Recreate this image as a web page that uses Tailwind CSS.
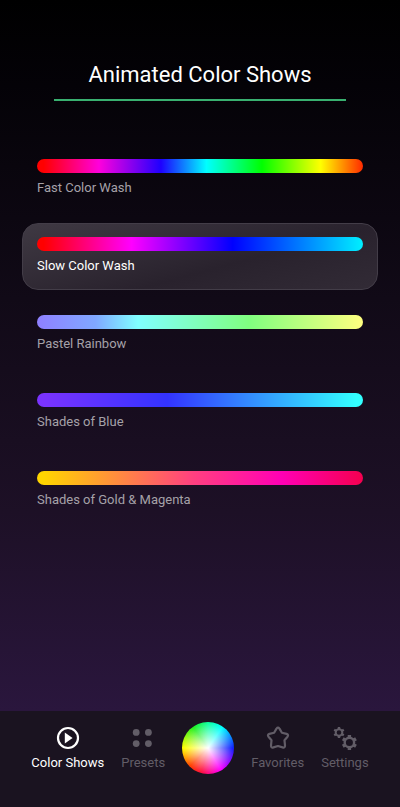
<!DOCTYPE html>
<html lang="en">
<head>
  <meta charset="UTF-8" />
  <meta name="viewport" content="width=device-width, initial-scale=1.0"/>
  <title>Animated Color Shows</title>
  <script src="https://cdn.jsdelivr.net/npm/@tailwindcss/browser@4"></script>
</head>
<body class="min-h-screen flex flex-col bg-[#1a1320] font-['Roboto',sans-serif] text-white">

  <main class="flex-1 flex flex-col bg-[linear-gradient(to_bottom,#000000_0%,#040207_12%,#110a17_42%,#1d1026_72%,#2a163d_100%)]">
    <header class="mx-[54px] pt-[59px] pb-2 border-b-2 border-[#39b070] text-center">
      <h1 class="text-[22px] leading-8">Animated Color Shows</h1>
    </header>

    <!-- Color shows -->
    <div class="mt-11 mx-[22px] flex flex-col gap-[11px] text-[13px] leading-5 text-[#a5a1a8]">
      <button type="button" aria-pressed="false" class="h-[67px] px-3.5 pt-[13px] flex flex-col gap-[5px] border border-transparent rounded-2xl text-left">
        <span class="w-full h-[14px] rounded-full bg-[linear-gradient(to_right,#ff0000_2%,#ff00dc_19%,#1e00ff_38%,#00ffff_52%,#00ff00_69%,#ffff00_87%,#ff2a00_100%)]"></span>
        <span>Fast Color Wash</span>
      </button>
      <button type="button" aria-pressed="true" class="h-[67px] px-3.5 pt-[13px] flex flex-col gap-[5px] border border-[#433d48] rounded-2xl bg-[linear-gradient(165deg,#3f3943_0%,#29222d_60%,#322b36_100%)] text-white text-left">
        <span class="w-full h-[14px] rounded-full bg-[linear-gradient(to_right,#ff0000_2%,#ff00ff_29%,#0000ff_60%,#00f0ff_100%)]"></span>
        <span>Slow Color Wash</span>
      </button>
      <button type="button" aria-pressed="false" class="h-[67px] px-3.5 pt-[13px] flex flex-col gap-[5px] border border-transparent rounded-2xl text-left">
        <span class="w-full h-[14px] rounded-full bg-[linear-gradient(to_right,#8f80ff_0%,#80a8ff_18%,#80ffff_31%,#80ff80_65%,#ffff80_100%)]"></span>
        <span>Pastel Rainbow</span>
      </button>
      <button type="button" aria-pressed="false" class="h-[67px] px-3.5 pt-[13px] flex flex-col gap-[5px] border border-transparent rounded-2xl text-left">
        <span class="w-full h-[14px] rounded-full bg-[linear-gradient(to_right,#7a33ff_2%,#3333ff_40%,#33ffff_98%)]"></span>
        <span>Shades of Blue</span>
      </button>
      <button type="button" aria-pressed="false" class="h-[67px] px-3.5 pt-[13px] flex flex-col gap-[5px] border border-transparent rounded-2xl text-left">
        <span class="w-full h-[14px] rounded-full bg-[linear-gradient(to_right,#ffd500_2%,#ff4080_48%,#ff00b4_75%,#f5004f_100%)]"></span>
        <span>Shades of Gold &amp; Magenta</span>
      </button>
    </div>
  </main>

  <!-- Bottom navigation -->
  <nav class="h-24 pt-[11px] flex justify-center items-start gap-[17px] text-[13px] leading-5 text-[#625d67]">
    <a href="#shows" aria-current="page" class="pt-1 flex flex-col items-center gap-[3px] text-white">
      <svg class="size-6" viewBox="0 0 24 24" fill="none" stroke="currentColor" stroke-width="2.2">
        <circle cx="12" cy="12" r="10"/>
        <path d="M8.8 6.6v10.8l7.8-5.4z" fill="currentColor" stroke="none"/>
      </svg>
      <span>Color Shows</span>
    </a>
    <a href="#presets" class="pt-1 flex flex-col items-center gap-[3px]">
      <svg class="size-6" viewBox="0 0 24 24" fill="currentColor">
        <circle cx="5.2" cy="6.4" r="3.4"/>
        <circle cx="17.4" cy="6.4" r="3.4"/>
        <circle cx="5.2" cy="17.6" r="3.4"/>
        <circle cx="17.4" cy="17.6" r="3.4"/>
      </svg>
      <span>Presets</span>
    </a>
    <a href="#wheel" aria-label="Color wheel" class="size-[52px] rounded-full bg-[radial-gradient(circle,#ffffff_0%,#ffffff00_68%),conic-gradient(#10ffa0_0deg,#00ffff_35deg,#1020ff_90deg,#ff00ff_150deg,#ff1040_195deg,#ff4000_225deg,#ffff00_270deg,#20f020_325deg,#10ffa0_360deg)]"></a>
    <a href="#favorites" class="pt-1 flex flex-col items-center gap-[3px]">
      <svg class="size-6" viewBox="0 0 24 24" fill="none" stroke="currentColor" stroke-width="2.2" stroke-linejoin="round">
        <path d="M10.5 2.6Q12 .8 13.5 2.6L15.9 6.8L20.6 7.9Q23 8.7 21.5 10.7L18.5 14.3L19 19.4Q19.1 22.1 16.6 21.4L12 20L7.4 21.4Q4.9 22.1 5 19.4L5.5 14.3L2.5 10.7Q1 8.7 3.4 7.9L8.1 6.8Z"/>
      </svg>
      <span>Favorites</span>
    </a>
    <a href="#settings" class="pt-1 flex flex-col items-center gap-[3px]">
      <svg class="size-6" viewBox="0 0 24 24" fill="none" stroke="currentColor">
        <g stroke-width="2">
          <circle cx="6" cy="6.5" r="3.3"/>
          <path stroke-width="2.4" d="M6 3.4V1M6 9.6V12M8.7 4.95L10.8 3.75M3.3 8.05L1.2 9.25M8.7 8.05L10.8 9.25M3.3 4.95L1.2 3.75"/>
        </g>
        <g stroke-width="2.4">
          <circle cx="16.4" cy="16.5" r="4.7"/>
          <path stroke-width="3.4" d="M16.4 11.9V9.1M16.4 21.1V23.9M20.4 14.2L23 12.7M12.4 18.8L9.8 20.3M20.4 18.8L23 20.3M12.4 14.2L9.8 12.7"/>
        </g>
      </svg>
      <span>Settings</span>
    </a>
  </nav>

</body>
</html>
